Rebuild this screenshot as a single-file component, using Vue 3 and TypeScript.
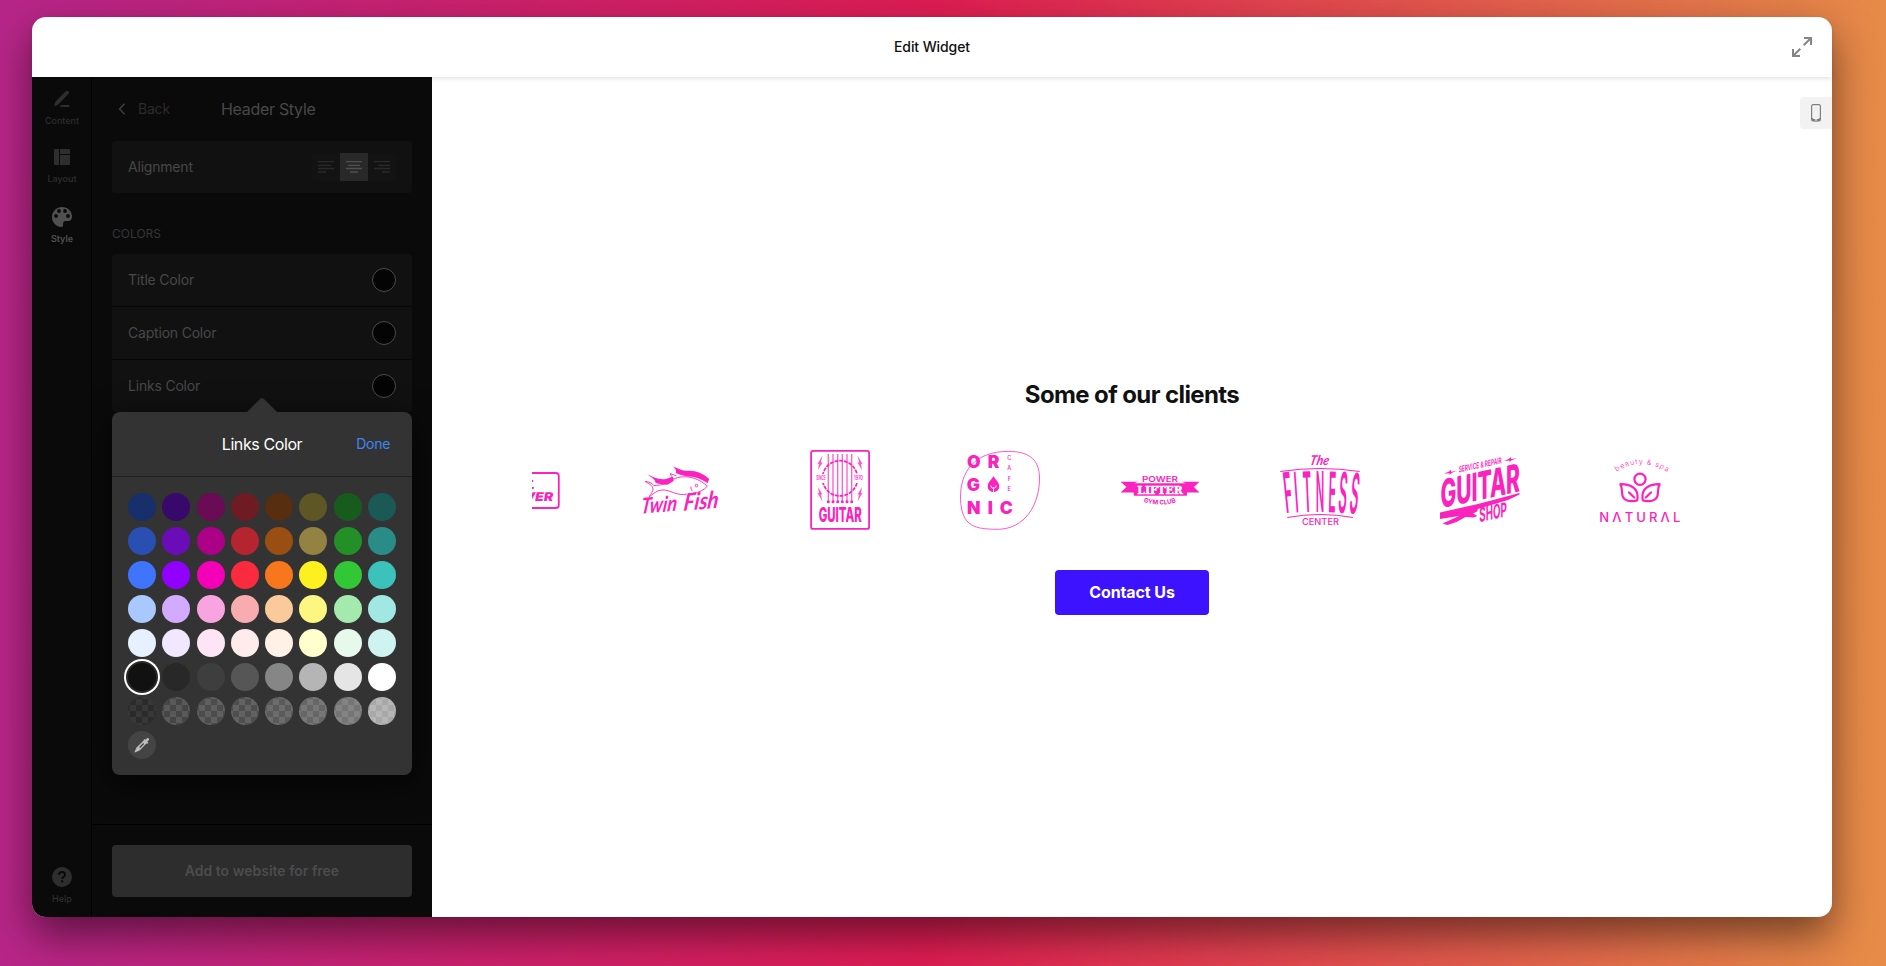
<script setup lang="ts">
interface Swatch {
  color: string
  selected?: boolean
  checker?: boolean
}

const solid: string[][] = [
  ['#172f6b', '#38086a', '#6a0b55', '#6f1b24', '#572e10', '#5f5626', '#185c1d', '#1a5955'],
  ['#294fb3', '#6a0db8', '#ac0087', '#b42530', '#994e12', '#938241', '#238f27', '#298c87'],
  ['#3f74ff', '#9100ff', '#f400b9', '#fb2b3f', '#f8771c', '#fdf021', '#32c734', '#3bc2bb'],
  ['#a9c8ff', '#d2aaff', '#f8a4e0', '#f9acb0', '#fbca9b', '#fdf681', '#a4eaae', '#a1e7e2'],
  ['#e7f0ff', '#f1e7ff', '#fde5f6', '#ffebeb', '#fff1e5', '#feffcd', '#e6f9ea', '#cff3f0'],
  ['#111111', '#282828', '#3e3e3e', '#565656', '#868686', '#b5b5b5', '#e5e5e5', '#ffffff'],
]

const alpha: string[] = [
  'rgba(17,17,17,.55)',
  'rgba(60,60,60,.3)',
  'rgba(80,80,80,.3)',
  'rgba(90,90,90,.3)',
  'rgba(120,120,120,.35)',
  'rgba(145,145,145,.4)',
  'rgba(165,165,165,.47)',
  'rgba(255,255,255,.52)',
]

const swatches: Swatch[] = [
  ...solid.flat().map((color, i) => ({ color, selected: i === 40 })),
  ...alpha.map((color) => ({ color, checker: true })),
]

const colorRows: string[] = ['Title Color', 'Caption Color', 'Links Color']

const strings: number[] = [28.3, 33, 37.7, 42.3, 47, 51.7]

const fitness = [
  { ch: 'F', x: 6, r: -6, w: 8 },
  { ch: 'I', x: 15.8, r: -4, w: 3.5 },
  { ch: 'T', x: 24, r: -2.5, w: 8.5 },
  { ch: 'N', x: 35.7, r: 0, w: 8.5 },
  { ch: 'E', x: 48, r: 1.5, w: 7.5 },
  { ch: 'S', x: 57.5, r: 4, w: 8.5 },
  { ch: 'S', x: 68.5, r: 6, w: 8.5 },
]
</script>

<template>
  <div class="backdrop">
    <div class="window">
      <header class="topbar">
        <span class="topbar-title">Edit Widget</span>
        <svg class="expand" width="20" height="20" viewBox="0 0 20 20" fill="none" stroke="#858585" stroke-width="2">
          <path d="M12 1h7v7M19 1l-7.3 7.3M8 19H1v-7M1 19l7.3-7.3" />
        </svg>
      </header>

      <div class="body">
        <nav class="rail">
          <div class="rail-item first">
            <svg width="20" height="20" viewBox="0 0 20 20">
              <path fill="#2e2e2e" d="M2.200 17.400l1-4.400L13.400 2.400c2-1.800 4.600.6 3 2.700L6 15.800z" />
              <path fill="#2e2e2e" d="M9.500 16h8.300l-1 1.900H7.700z" />
            </svg>
            <span>Content</span>
          </div>
          <div class="rail-item second">
            <svg width="20" height="20" viewBox="0 0 20 20" fill="#2e2e2e">
              <path d="M3 2h4v16H3a1 1 0 0 1-1-1V3a1 1 0 0 1 1-1zM8 2h9a1 1 0 0 1 1 1v4H8zM8 8h10v9a1 1 0 0 1-1 1H8z" />
            </svg>
            <span>Layout</span>
          </div>
          <div class="rail-item third active">
            <svg width="20" height="20" viewBox="0 0 20 20">
              <path fill="#505050" d="M10 0C4.500 0 0 4.500 0 10s4.400 10 9.600 10c1 0 1.700-.8 1.500-1.700-.3-1.400 0-4 2.400-4.200h2.800c2.300-.2 3.700-2.100 3.700-4.600C20 4 15.500 0 10 0z" />
              <g fill="#0a0a0a">
                <circle cx="7" cy="4" r="1.900" />
                <circle cx="13" cy="4" r="1.900" />
                <circle cx="4" cy="9" r="1.900" />
                <circle cx="16" cy="9" r="1.900" />
              </g>
            </svg>
            <span>Style</span>
          </div>
          <div class="rail-item help">
            <svg width="20" height="20" viewBox="0 0 20 20">
              <circle cx="10" cy="10" r="10" fill="#2e2e2e" />
              <path d="M6.900 7.800c.1-1.800 1.300-2.700 3.100-2.700s3.100 1 3.100 2.600c0 2.100-2.800 2.100-2.900 4.200" fill="none" stroke="#0a0a0a" stroke-width="2" />
              <rect x="9.100" y="13.300" width="2.200" height="2.100" fill="#0a0a0a" />
            </svg>
            <span>Help</span>
          </div>
        </nav>

        <aside class="panel">
          <div class="panel-head">
            <div class="back">
              <svg width="8" height="12" viewBox="0 0 8 12" fill="none" stroke="#3c3c3c" stroke-width="1.600">
                <path d="M6.600 .8L1.600 6l5 5.200" />
              </svg>
              <span>Back</span>
            </div>
            <span class="panel-title">Header Style</span>
          </div>

          <div class="card">
            <div class="row">
              <span>Alignment</span>
              <div class="segment">
                <svg width="28" height="28" viewBox="0 0 28 28" class="seg" stroke-width="1.300">
                  <path d="M6 8.700h16M6 12.300h13M6 15.500h16M6 19h8" />
                </svg>
                <svg width="28" height="28" viewBox="0 0 28 28" class="seg on" stroke-width="1.300">
                  <path d="M6 8.700h16M8 12.300h12M6 15.500h16M10 19h8" />
                </svg>
                <svg width="28" height="28" viewBox="0 0 28 28" class="seg" stroke-width="1.300">
                  <path d="M6 8.700h16M10 12.300h12M6 15.500h16M14 19h8" />
                </svg>
              </div>
            </div>
          </div>

          <div class="group-label">COLORS</div>
          <div class="card">
            <div v-for="label in colorRows" :key="label" class="row">
              <span>{{ label }}</span>
              <i class="dot"></i>
            </div>
          </div>

          <footer class="panel-foot">
            <button class="add">Add to website for free</button>
          </footer>

          <div class="popover">
            <svg class="arrow" width="32" height="15" viewBox="0 0 32 15">
              <path fill="#333" d="M0 15L13.500 1.500Q16-.8 18.500 1.500L32 15z" />
            </svg>
            <div class="pop-head">
              <span class="pop-title">Links Color</span>
              <span class="done">Done</span>
            </div>
            <div class="swatches">
              <i
                v-for="(s, i) in swatches"
                :key="i"
                class="swatch"
                :class="{ selected: s.selected, checker: s.checker }"
                :style="{ '--c': s.color }"
              ></i>
              <span class="picker">
                <svg width="16" height="16" viewBox="0 0 16 16">
                  <path fill="#bdbdbd" fill-rule="evenodd" d="M9.700 2.900l1-1 .9.900L13 1.200c1-1 2.900.8 1.900 1.900L13.300 4.700l1 1-1.200 1.300-.7-.6L5.600 13.400.8 15.600l-.4-.4 2.100-4.700 6.900-6.800zM9.200 6.100l-4 4 .9.900 4-4z" />
                </svg>
              </span>
            </div>
          </div>
        </aside>

        <main class="preview">
          <button class="device">
            <svg width="10" height="18" viewBox="0 0 10 18">
              <rect x=".6" y=".6" width="8.800" height="16.300" rx="1.600" fill="none" stroke="#808080" stroke-width="1.200" />
              <path fill="#808080" d="M.5 14h1.200q.3 1 1.300 1h4q1 0 1.300-1h1.200v1.500q0 1.800-1.800 1.800H2.300Q.5 17.300.5 15.500z" />
              <circle cx="5" cy="15.900" r=".8" fill="#fff" />
            </svg>
          </button>

          <h1>Some of our clients</h1>

          <div class="carousel">
            <div class="track">
              <div class="slide">
                <svg class="logo" viewBox="0 0 80 80">
                  <rect x="1" y="23" width="77.800" height="35" rx="3" fill="none" stroke="#fb23bd" stroke-width="1.800" />
                  <path d="M52 30h1.400l-.6 2H52zM52 37h2l-.5 2H52z" />
                  <text transform="translate(43.500 51.200) skewX(-10)" class="heavy" font-size="12.200" textLength="29" lengthAdjust="spacingAndGlyphs">VER</text>
                </svg>
              </div>

              <div class="slide">
                <svg class="logo" viewBox="0 0 80 80">
                  <path d="M32.300 16C38 18.500 42 21 49 20.800c8 .1 15 3.200 20.200 8.200l-1.700 4.200C61 28.500 54 26.500 46 26.200l-6.500-1.800-3.800-1.300c1.200-3-.8-5-3.400-7.100z" />
                  <path d="M7.300 24.300c6.200 2.700 10.500 5.400 17 4.900 3.200-.3 6-2 8.700-2.500l.6 4.300-5.600 3.400c-4 1.200-8.500-.4-12.500-1.600.2-3-4-5.200-8.200-8.500z" />
                  <g fill="none" stroke="#fb23bd" stroke-width=".9">
                    <path d="M5.200 31.500c3 .3 7 1.200 8.500 4 8.500.1 12-2.500 18-5.600 9-4.500 22-5.500 35.700 6.200-3 4-9 6.200-13.400 7.500M5.200 31.500c4.600 2.500 8.700 5 7.600 9-.8 3-3.500 5-3.500 6.300 6-5 10-7.200 15-6.800 7 .6 13 6 22.500 4.200" />
                    <path d="M30.200 23.700c2.500.5 4 1.400 6.300 2.300M30.200 23.700c1 2 2.500 3.500 2.700 5.800M51 36.500c-.2 2.200 0 3.300 1.500 4.500M53.200 43q2 .2 3-1" />
                    <circle cx="56.500" cy="35.500" r="1.300" />
                  </g>
                  <g class="script">
                    <text transform="translate(.5 63.800) rotate(-5) skewX(-12)" font-size="21.500" textLength="36" lengthAdjust="spacingAndGlyphs">Twin</text>
                    <text transform="translate(43 60.800) rotate(-5) skewX(-12)" font-size="23.500" textLength="35" lengthAdjust="spacingAndGlyphs">Fish</text>
                  </g>
                </svg>
              </div>

              <div class="slide">
                <svg class="logo" viewBox="0 0 80 80">
                  <rect x="11.100" y=".9" width="58" height="78" rx="2" fill="none" stroke="#fb23bd" stroke-width="1.800" />
                  <circle cx="40" cy="28.300" r="17.600" fill="none" stroke="#fb23bd" stroke-width="1.700" stroke-dasharray="3.800 1" />
                  <path fill="#fff" d="M21 24h5v9h-5zM54.500 24h5v9h-5z" />
                  <g v-for="x in strings" :key="x">
                    <path :d="`M${x} 4v47`" stroke="#fb23bd" stroke-width="1.300" stroke-opacity=".75" />
                    <circle :cx="x" cy="51.700" r="1.500" />
                  </g>
                  <path d="M22.500 5.500l-1.600 7h1.700l-4.600 7.500 1-6h-1.500zM57.500 5.500l1.600 7h-1.700l4.600 7.500-1-6h1.500zM22.500 51.500l-1.600-7h1.700L18 37l1 6h-1.500zM57.500 51.500l1.600-7h-1.700L62 37l-1 6h1.500z" fill-opacity=".75" />
                  <text x="16.300" y="30.400" font-size="5.500" font-weight="600" textLength="9.400" lengthAdjust="spacingAndGlyphs">SINCE</text>
                  <text x="54" y="30.400" font-size="5.500" font-weight="600" textLength="9" lengthAdjust="spacingAndGlyphs">1970</text>
                  <text x="18.800" y="71.700" font-size="19.800" font-weight="800" textLength="43" lengthAdjust="spacingAndGlyphs">GUITAR</text>
                </svg>
              </div>

              <div class="slide">
                <svg class="logo" viewBox="0 0 80 80">
                  <path d="M49 1.400C67 1.500 79 8 79.500 27 80 53 66 80 36 79.300 17 78.800 1 78 .5 48 .2 22 14 1.200 49 1.400z" fill="none" stroke="#fb23bd" stroke-width=".75" />
                  <g class="heavy" font-size="17.500" text-anchor="middle">
                    <text x="13.700" y="18.100">O</text>
                    <text x="33.500" y="18.100">R</text>
                    <text x="13.300" y="41.300">G</text>
                    <text x="13.700" y="64.300">N</text>
                    <text x="30.300" y="64.300">I</text>
                    <text x="46.300" y="64.300">C</text>
                  </g>
                  <path d="M33.500 26.300c2.500 3.700 5.800 6.500 5.800 10.200 0 3-2.500 5.500-5.800 5.500s-5.800-2.500-5.800-5.500c0-3.700 3.300-6.500 5.800-10.200z" />
                  <path d="M33.500 42v-5M33.500 38.500q-2.500-.3-2.800-3M33.500 38.500q2.500-.3 2.800-3" fill="none" stroke="#fff" stroke-width=".9" />
                  <g font-size="5.600" font-weight="500" text-anchor="middle">
                    <text x="49.300" y="9.700">C</text>
                    <text x="49.300" y="20.200">A</text>
                    <text x="49.300" y="30.700">F</text>
                    <text x="49.300" y="41.200">E</text>
                  </g>
                </svg>
              </div>

              <div class="slide">
                <svg class="logo" viewBox="0 0 80 80">
                  <text x="22" y="32" font-size="7.800" font-weight="600" textLength="36" lengthAdjust="spacingAndGlyphs">POWER</text>
                  <path d="M.5 31.700h17.500l-3.500 1.500h51l-3.500-1.500h17.500L74 37l5.500 5.500H67V45q0 .8-.8.8H14.500q-.8 0-.8-.8v-2.500H.5L6.500 37z" />
                  <text x="17.300" y="44" class="slab" font-size="11.600" textLength="45.500" lengthAdjust="spacingAndGlyphs">LIFTER</text>
                  <path id="gym-arc" d="M23.500 52Q40 57 57 52" fill="none" />
                  <text font-size="6.200" font-weight="700"><textPath href="#gym-arc" textLength="33" lengthAdjust="spacingAndGlyphs">GYM CLUB</textPath></text>
                </svg>
              </div>

              <div class="slide">
                <svg class="logo" viewBox="0 0 80 80">
                  <text transform="translate(29.300 15.300) skewX(-12)" class="script" font-size="13.500" textLength="19" lengthAdjust="spacingAndGlyphs">The</text>
                  <path d="M.3 21.500Q40 15.500 79.700 21.500M7.300 67.500Q40 61.500 73 67.500" fill="none" stroke="#fb23bd" stroke-width="1" />
                  <text
                    v-for="(l, i) in fitness"
                    :key="i"
                    :transform="`translate(${l.x} ${61.800 + Math.abs(i - 3) * 0.400}) rotate(${l.r})`"
                    font-size="56"
                    font-weight="600"
                  ><tspan :textLength="l.w" lengthAdjust="spacingAndGlyphs">{{ l.ch }}</tspan></text>
                  <text x="22" y="75" font-size="8.600" font-weight="500" textLength="37" lengthAdjust="spacingAndGlyphs">CENTER</text>
                </svg>
              </div>

              <div class="slide">
                <svg class="logo" viewBox="0 0 80 80">
                  <g transform="skewY(-12)">
                    <text x="18.700" y="26.500" font-size="8.500" font-weight="600" textLength="43" lengthAdjust="spacingAndGlyphs">SERVICE &amp; REPAIR</text>
                    <path d="M4 24.500l5-1 2-1.500v2l5.500.4-5 1.100-2 1.500v-1.800zM64 24.500l5-1 2-1.500v2l5.500.4-5 1.100-2 1.500v-1.800z" />
                    <text x=".5" y="58.400" font-size="39" font-weight="800" textLength="79.500" lengthAdjust="spacingAndGlyphs">GUITAR</text>
                    <text x="39.300" y="80.500" font-size="20" font-weight="700" textLength="27.500" lengthAdjust="spacingAndGlyphs">SHOP</text>
                  </g>
                  <path d="M0 62.500L38 54l41.500-11v1.500L68 50l-30 9-1 2.500-4 2 4.500 2.500-4 1.500-8-.5-9 5-9 3-5-1.500L19 66 0 69z" />
                </svg>
              </div>

              <div class="slide">
                <svg class="logo" viewBox="0 0 80 80">
                  <path id="spa-arc" d="M16.500 21.700Q40 6.500 66 21.200" fill="none" />
                  <text font-size="7.200" font-weight="300"><textPath href="#spa-arc" textLength="54">beauty &amp; spa</textPath></text>
                  <g fill="none" stroke="#fb23bd" stroke-width="2.200" stroke-linejoin="round" stroke-linecap="round">
                    <circle cx="40" cy="29.300" r="5.600" />
                    <path d="M20.400 34.200C30 34 37.500 38 37.500 46v3q0 1.800-2.500 1.800-13.500 2-13-9.800Q21.800 37 20.400 34.200zM29 42.500l5.200 5" />
                    <path d="M59.600 34.200C50 34 42.500 38 42.500 46v3q0 1.800 2.500 1.800 13.500 2 13-9.800Q58.200 37 59.600 34.200zM51 42.500l-5.200 5" />
                  </g>
                  <text x="-.7" y="71.700" font-size="13" font-weight="500" textLength="81">NΛTURΛL</text>
                </svg>
              </div>
            </div>
          </div>

          <button class="contact">Contact Us</button>
        </main>
      </div>
    </div>
  </div>
</template>

<style>
body {
  margin: 0;
  overflow: hidden;
}
</style>

<style scoped>
.backdrop {
  box-sizing: border-box;
  width: 1886px;
  height: 966px;
  padding: 17px 54px 49px 32px;
  background: linear-gradient(91deg, #b62689 0%, #df1d53 49.500%, #e68b48 99%);
  font-family: Inter, 'Liberation Sans', sans-serif;
  overflow: hidden;
}
.window {
  height: 900px;
  border-radius: 14px;
  background: #fff;
  display: flex;
  flex-direction: column;
  box-shadow: 0 18px 40px rgba(0, 0, 0, .5);
}
.topbar {
  height: 60px;
  flex: none;
  display: grid;
  grid-template-columns: 1fr auto 1fr;
  align-items: center;
  padding: 0 20px;
  border-radius: 14px 14px 0 0;
  box-shadow: 0 2px 4px rgba(0, 0, 0, .1);
}
.topbar-title {
  grid-column: 2;
  padding-bottom: 2px;
  font-size: 14px;
  font-weight: 500;
  letter-spacing: -.1px;
  color: #111;
}
.expand {
  justify-self: end;
}
.body {
  flex: 1;
  display: flex;
  min-height: 0;
}
.rail {
  box-sizing: border-box;
  width: 60px;
  padding-left: 1px;
  background: #0a0a0a;
  border-right: 1px solid #000;
  border-radius: 0 0 0 14px;
  display: flex;
  flex-direction: column;
  align-items: center;
}
.rail-item {
  display: flex;
  flex-direction: column;
  align-items: center;
  height: 38px;
  justify-content: space-between;
  font-size: 9px;
  line-height: 12px;
  font-weight: 500;
  color: #2e2e2e;
}
.rail-item.first {
  margin-top: 12px;
}
.rail-item.second {
  margin-top: 20px;
}
.rail-item.third {
  margin-top: 22px;
}
.rail-item.active {
  color: #505050;
  font-weight: 600;
}
.rail-item.help {
  margin-top: auto;
  margin-bottom: 12px;
}
.panel {
  position: relative;
  box-sizing: border-box;
  width: 340px;
  padding: 0 20px;
  background: #0a0a0a;
  display: flex;
  flex-direction: column;
  color: #484848;
  overflow: hidden;
}
.panel-head {
  height: 64px;
  display: flex;
  align-items: center;
}
.back {
  width: 103px;
  display: flex;
  align-items: center;
  gap: 12px;
  padding-left: 6px;
  padding-bottom: 1px;
  font-size: 14px;
  letter-spacing: -.2px;
  color: #2c2c2c;
}
.panel-title {
  font-size: 16px;
  letter-spacing: -.3px;
}
.card {
  background: #111;
  border-radius: 4px;
}
.row {
  height: 52px;
  padding: 0 16px;
  display: flex;
  align-items: center;
  justify-content: space-between;
  font-size: 14px;
  letter-spacing: -.2px;
}
.row > span {
  padding-bottom: 1px;
}
.row + .row {
  border-top: 1px solid #070707;
}
.segment {
  display: flex;
  background: #131313;
  border-radius: 3px;
}
.seg {
  stroke: #2a2a2a;
  display: block;
}
.seg.on {
  background: #292929;
  stroke: #505050;
}
.group-label {
  margin-top: 32px;
  height: 29px;
  line-height: 17px;
  font-size: 12px;
  color: #363636;
}
.dot {
  width: 22px;
  height: 22px;
  border: 1px solid #4b4b4b;
  border-radius: 50%;
  background: #040404;
}
.panel-foot {
  margin: auto -20px 0;
  padding: 20px;
  border-top: 1px solid #000;
}
button {
  border: 0;
  padding: 0;
  font-family: inherit;
}
.add {
  display: block;
  width: 100%;
  height: 52px;
  padding-bottom: 2px;
  border-radius: 4px;
  background: #2d2d2d;
  color: #4c4c4c;
  font-size: 14px;
  font-weight: 600;
}
.popover {
  position: absolute;
  left: 20px;
  top: 335px;
  width: 300px;
  height: 363px;
  border-radius: 8px;
  background: #333;
  box-shadow: 0 8px 32px rgba(0, 0, 0, .7);
}
.arrow {
  position: absolute;
  left: 134px;
  top: -14px;
}
.pop-head {
  height: 64px;
  border-bottom: 1px solid #1f1f1f;
  display: grid;
  grid-template-columns: 1fr auto 1fr;
  align-items: center;
  padding: 0 22px;
}
.pop-title {
  grid-column: 2;
  color: #fff;
  font-size: 16px;
  letter-spacing: -.4px;
}
.done {
  justify-self: end;
  padding-bottom: 1px;
  color: #3f86f0;
  font-size: 14px;
  letter-spacing: -.3px;
}
.swatches {
  padding: 16px;
  display: grid;
  grid-template-columns: repeat(8, 28px);
  justify-content: space-between;
  row-gap: 6px;
}
.swatch {
  width: 28px;
  height: 28px;
  border-radius: 50%;
  background: var(--c);
}
.swatch.selected {
  box-shadow: 0 0 0 2px #292929, 0 0 0 4px #fff;
}
.swatch.checker {
  background: linear-gradient(var(--c), var(--c)),
    repeating-conic-gradient(#666 0 25%, #4a4a4a 0 50%) 2px 2px / 12px 12px;
}
.picker {
  width: 28px;
  height: 28px;
  border-radius: 50%;
  background: #444;
  display: grid;
  place-items: center;
}
.preview {
  position: relative;
  flex: 1;
  display: flex;
  flex-direction: column;
  align-items: center;
  justify-content: center;
}
.device {
  position: absolute;
  right: 0;
  top: 20px;
  width: 32px;
  height: 32px;
  border-radius: 4px 0 0 4px;
  background: #f2f2f2;
  display: grid;
  place-items: center;
}
h1 {
  margin: 0 0 40px;
  padding-top: 1px;
  font-size: 24px;
  line-height: 30px;
  font-weight: 700;
  letter-spacing: -.6px;
  color: #111;
}
.carousel {
  width: 1200px;
  overflow: hidden;
}
.track {
  display: flex;
  margin-left: -92px;
}
.slide {
  flex: none;
  width: 160px;
  display: flex;
  justify-content: center;
}
.logo {
  display: block;
  width: 80px;
  height: 80px;
  fill: #fb23bd;
  overflow: visible;
}
.heavy {
  font-weight: 900;
}
.script {
  font-family: Lato, sans-serif;
  font-style: italic;
  font-weight: 700;
}
.slab {
  font-family: 'DejaVu Serif', serif;
  font-weight: 700;
  fill: #fff;
  stroke: #fff;
  stroke-width: .5px;
}
.contact {
  margin-top: 40px;
  width: 154px;
  height: 45px;
  padding-bottom: 1px;
  border-radius: 4px;
  background: #3c12ff;
  color: #fff;
  font-size: 16px;
  font-weight: 700;
  letter-spacing: -.1px;
}
</style>
